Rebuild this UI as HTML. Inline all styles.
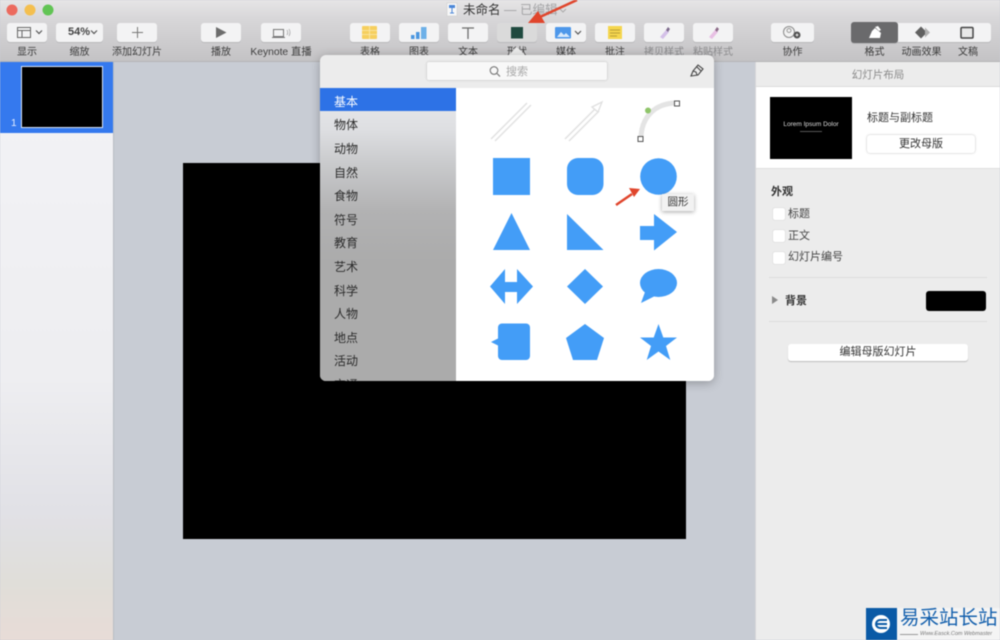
<!DOCTYPE html>
<html lang="zh">
<head>
<meta charset="utf-8">
<title>Keynote</title>
<style>
html,body{margin:0;padding:0;width:1000px;height:640px;overflow:hidden;background:#c8ccd4}
body{position:relative;font-family:"Liberation Sans","Noto Sans CJK SC",sans-serif;color:#333}
div{position:absolute;box-sizing:border-box}
#w{left:0;top:0;width:1000px;height:640px;overflow:hidden;filter:blur(.45px)}
.tb{left:0;top:0;width:1000px;height:62px;background:linear-gradient(#e6e5e6,#d8d7d9 30%,#c4c3c5);border-bottom:1px solid #b4b4b6}
.b{top:23px;height:19px;background:#f3f3f4;border-radius:3px;box-shadow:0 1px 0 #b9b9bb}
.l{top:46px;height:13px;line-height:13px;font-size:10px;text-align:center;color:#3c3c3c;white-space:nowrap}
.c{left:334px;width:100px;height:18px;line-height:18px;font-size:12px;color:#2b2b2b}
.cb{left:773px;width:12px;height:12px;background:#fff;border-radius:2px;box-shadow:0 0 1px #aaa}
.t{font-size:11px;line-height:14px;color:#444;white-space:nowrap}
.btn{background:#fff;border-radius:3px;box-shadow:0 1px 1px #bbb;text-align:center;font-size:11px;color:#333}
svg{position:absolute;left:0;top:0}
</style>
</head>
<body>
<div id="w">
<!-- toolbar -->
<div class="tb"></div>
<div class="b" style="left:7px;width:40px"></div>
<div class="b" style="left:56px;width:47px"></div>
<div class="b" style="left:117px;width:40px"></div>
<div class="b" style="left:201px;width:40px"></div>
<div class="b" style="left:261px;width:40px"></div>
<div class="b" style="left:350px;width:40px"></div>
<div class="b" style="left:399px;width:40px"></div>
<div class="b" style="left:448px;width:40px"></div>
<div class="b" style="left:497px;width:40px;background:#dadada"></div>
<div class="b" style="left:546px;width:40px"></div>
<div class="b" style="left:595px;width:40px"></div>
<div class="b" style="left:644px;width:40px"></div>
<div class="b" style="left:693px;width:40px"></div>
<div class="b" style="left:771px;width:43px"></div>
<div class="b" style="left:851px;width:140px"></div>
<div class="b" style="left:851px;width:47px;top:22px;height:21px;background:#6a6a6c"></div>
<div class="t" style="left:68px;top:25px;font-size:11px;font-weight:bold;line-height:15px;color:#444">54%</div>
<div class="l" style="left:7px;width:40px">显示</div>
<div class="l" style="left:56px;width:47px">缩放</div>
<div class="l" style="left:107px;width:60px">添加幻灯片</div>
<div class="l" style="left:201px;width:40px">播放</div>
<div class="l" style="left:240px;width:82px;font-size:10.300px">Keynote 直播</div>
<div class="l" style="left:350px;width:40px">表格</div>
<div class="l" style="left:399px;width:40px">图表</div>
<div class="l" style="left:448px;width:40px">文本</div>
<div class="l" style="left:497px;width:40px">形状</div>
<div class="l" style="left:546px;width:40px">媒体</div>
<div class="l" style="left:595px;width:40px">批注</div>
<div class="l" style="left:639px;width:50px;color:#8b8b8d">拷贝样式</div>
<div class="l" style="left:688px;width:50px;color:#8b8b8d">粘贴样式</div>
<div class="l" style="left:771px;width:43px">协作</div>
<div class="l" style="left:851px;width:47px">格式</div>
<div class="l" style="left:898px;width:47px">动画效果</div>
<div class="l" style="left:945px;width:46px">文稿</div>
<div style="left:463px;top:3px;font-size:12.500px;line-height:15px;white-space:nowrap;color:#333">未命名 <span style="color:#a2a2a4">— 已编辑</span></div>

<!-- sidebar -->
<div style="left:0;top:62px;width:114px;height:578px;background:linear-gradient(#f3f3f6,#eeeef1 55%,#e1e1e6 78%,#e0ded9 90%,#e8dcd7);border-right:1px solid #b9bdc3"></div>
<div style="left:0;top:62px;width:113px;height:71px;background:#3579ee"></div>
<div style="left:21px;top:66px;width:82px;height:62px;background:#000;border:1px solid #dbe6f8"></div>
<div style="left:11px;top:117px;font-size:10px;line-height:13px;color:#e8f0ff">1</div>

<!-- slide -->
<div style="left:183px;top:163px;width:503px;height:376px;background:#000"></div>

<!-- right panel -->
<div style="left:755px;top:62px;width:245px;height:578px;background:#ececec;border-left:1px solid #d6d6d8"></div>
<div style="left:756px;top:62px;width:244px;height:25px;line-height:26px;text-align:center;font-size:10.500px;color:#8a8a8a;border-bottom:1px solid #dcdcdc">幻灯片布局</div>
<div style="left:756px;top:87px;width:244px;height:82px;background:#fff;border-bottom:1px solid #dfdfdf"></div>
<div style="left:770px;top:97px;width:82px;height:62px;background:#000"></div>
<div style="left:770px;top:120px;width:82px;text-align:center;font-size:6.500px;line-height:10px;color:#ddd;white-space:nowrap">Lorem Ipsum Dolor</div>
<div style="left:800px;top:131px;width:22px;height:1px;background:#555"></div>
<div class="t" style="left:867px;top:111px;color:#333">标题与副标题</div>
<div class="btn" style="left:867px;top:135px;width:108px;height:18px;line-height:18px;box-shadow:0 0 2px #bbb">更改母版</div>
<div class="t" style="left:771px;top:185px;font-weight:bold;color:#333">外观</div>
<div class="cb" style="top:208px"></div><div class="t" style="left:788px;top:207px">标题</div>
<div class="cb" style="top:230px"></div><div class="t" style="left:788px;top:229px">正文</div>
<div class="cb" style="top:252px"></div><div class="t" style="left:788px;top:250px">幻灯片编号</div>
<div style="left:769px;top:277px;width:218px;height:1px;background:#dcdcdc"></div>
<div class="t" style="left:785px;top:294px;font-weight:bold;color:#333">背景</div>
<div style="left:926px;top:291px;width:60px;height:20px;background:#000;border-radius:3px"></div>
<div style="left:769px;top:321px;width:218px;height:1px;background:#dcdcdc"></div>
<div class="btn" style="left:788px;top:344px;width:180px;height:17px;line-height:17px">编辑母版幻灯片</div>

<!-- popover -->
<div style="left:509px;top:47px;width:16px;height:16px;background:#ececec;transform:rotate(45deg) scale(.72);border-radius:2px"></div>
<div style="left:320px;top:55px;width:394px;height:326px;background:#ececec;border-radius:6px;overflow:hidden;box-shadow:0 2px 10px rgba(0,0,0,.28)">
  <div style="left:0;top:33px;width:136px;height:293px;background:linear-gradient(#eaebed,#dedfe2 14%,#c9cacc 26%,#b2b2b3 42%,#ababab 60%,#ababab)"></div>
  <div style="left:0;top:33px;width:136px;height:23px;background:#2d72e6"></div>
  <div style="left:136px;top:33px;width:258px;height:293px;background:#fff"></div>
  <div style="left:107px;top:7px;width:180px;height:18px;background:#f8f8f8;border-radius:2px;box-shadow:0 0 2px #b5b5b5"></div>
  <div style="left:186px;top:10px;font-size:11px;line-height:15px;color:#a8a8a8">搜索</div>
</div>
<div class="c" style="top:93px;color:#fff">基本</div>
<div class="c" style="top:116px">物体</div>
<div class="c" style="top:140px">动物</div>
<div class="c" style="top:164px">自然</div>
<div class="c" style="top:187px">食物</div>
<div class="c" style="top:211px">符号</div>
<div class="c" style="top:234px">教育</div>
<div class="c" style="top:258px">艺术</div>
<div class="c" style="top:282px">科学</div>
<div class="c" style="top:305px">人物</div>
<div class="c" style="top:329px">地点</div>
<div class="c" style="top:352px">活动</div>
<div style="left:320px;top:370px;width:136px;height:11px;overflow:hidden"><div class="c" style="left:14px;top:6px">交通</div></div>

<!-- icons and shapes -->
<svg width="1000" height="640" viewBox="0 0 1000 640">
  <circle cx="12" cy="10" r="5.500" fill="#ec6a5e"/>
  <circle cx="30" cy="10" r="5.500" fill="#f4bf4f"/>
  <circle cx="48" cy="10" r="5.500" fill="#61c454"/>
  <rect x="447" y="3" width="10" height="13" fill="#f7f7f7" stroke="#c8c8c8" stroke-width=".5"/>
  <rect x="449" y="5" width="6" height="3" fill="#4a86d8"/>
  <path d="M452 8v5M450 13h4" stroke="#4a86d8" fill="none"/>
  <path d="M560 9l3 3 3-3" stroke="#aaa" fill="none"/>
  <path d="M17.500 27.500h13v10h-13zM17.500 30.500h13M22 30.500v7" stroke="#666" fill="none"/>
  <path d="M36 30.500l3 3 3-3" stroke="#555" stroke-width="1.200" fill="none"/>
  <path d="M91 30.500l3 3 3-3" stroke="#555" stroke-width="1.200" fill="none"/>
  <path d="M137.500 27v11M132 32.500h11" stroke="#777" fill="none"/>
  <path d="M216 27l10.500 5.500L216 38z" fill="#6c6c6c"/>
  <path d="M273.500 29.500h10v7h-10zM272 37.500h13" stroke="#777" fill="none"/>
  <path d="M287 30q1.500 2.500 0 5M289 29q2 3.500 0 7" stroke="#999" stroke-width=".7" fill="none"/>
  <rect x="362" y="26" width="15" height="13" rx="1" fill="#f6cf5e"/>
  <path d="M362 30.500h15M362 34.500h15M369.500 26v13" stroke="#fbe9ae" stroke-width=".8"/>
  <rect x="411" y="35" width="3.500" height="4" fill="#4c97e0"/>
  <rect x="416" y="32" width="3.500" height="7" fill="#4c97e0"/>
  <rect x="421" y="27" width="5.500" height="12" fill="#6db0e8"/>
  <path d="M462 28h12M468 28v11" stroke="#6c6c6c" stroke-width="1.300" fill="none"/>
  <rect x="511" y="27" width="12" height="11.500" fill="#1f4a3f"/>
  <rect x="555" y="27" width="16" height="11.500" rx="1" fill="#4d97ea"/>
  <path d="M557 37l4-5 3 3 2-2 4 4z" fill="#d8e9fb"/>
  <path d="M575 31l3 3 3-3" stroke="#555" stroke-width="1.200" fill="none"/>
  <rect x="608" y="26" width="14" height="13" fill="#f5d64e"/>
  <path d="M610 30h10M610 33h10M610 36h7" stroke="#a58d32" stroke-width=".8"/>
  <path d="M660 37l6-7 3 2-6 7z" fill="#d4c0e8"/>
  <path d="M666 30l2-3 2 2-2 3z" fill="#7d6a8c"/>
  <path d="M709 37l6-7 3 2-6 7z" fill="#e8c0e4"/>
  <path d="M715 30l2-3 2 2-2 3z" fill="#8c6a88"/>
  <circle cx="789" cy="32" r="5.500" fill="#f2f2f2" stroke="#8a8a8a"/>
  <circle cx="789" cy="30.500" r="2" fill="none" stroke="#999"/>
  <circle cx="797" cy="35" r="3.500" fill="#555"/>
  <path d="M795.500 35h3M797 33.500v3" stroke="#fff" stroke-width=".8"/>
  <path d="M869 38l3-7 3-3 6 5-1 5z" fill="#fff"/>
  <path d="M875 27l3-1 3 4-2 1z" fill="#fff"/>
  <path d="M921 26.500l6 6-6 6-6-6z" fill="#606060"/>
  <path d="M925 27.500l5 5-5 5" fill="#b0b0b0"/>
  <rect x="961" y="27.500" width="12" height="10.500" rx="1" fill="#e8e8e8" stroke="#444" stroke-width="1.500"/>
  <circle cx="494" cy="70.500" r="3.800" fill="none" stroke="#777" stroke-width="1.100"/>
  <path d="M497 73.500l3 3" stroke="#777" stroke-width="1.200"/>
  <path d="M691 76l2-5 5-6 5 4-5 6zM697 67l4 4M693 71l3 1 1 3" fill="none" stroke="#444" stroke-width="1.100"/>
  <path d="M491 139l36-36M495 141l36-36" stroke="#e2e2e2" stroke-width="1.500"/>
  <path d="M565 139l30-30M569 141l30-30" stroke="#e2e2e2" stroke-width="1.500"/>
  <path d="M592 107l10-5-4 10z" fill="#fff" stroke="#e0e0e0" stroke-width="1.300"/>
  <path d="M641 139C641 118 654 103 677 103" fill="none" stroke="#e4e4e4" stroke-width="5"/>
  <circle cx="648" cy="110.500" r="3" fill="#8fc56a"/>
  <rect x="638" y="136.500" width="5" height="5" fill="#fff" stroke="#555"/>
  <rect x="674.500" y="101" width="5" height="5" fill="#fff" stroke="#555"/>
  <g fill="#439df7">
    <rect x="493" y="158" width="37" height="37"/>
    <rect x="567" y="158" width="36.500" height="37" rx="11"/>
    <circle cx="658.500" cy="176.500" r="18.300"/>
    <path d="M511.500 213L530 250H493z"/>
    <path d="M567 214l36.500 36H567z"/>
    <path d="M654 214l23 18-23 18.500V240h-14v-14h14z"/>
    <path d="M490 286.500L505 269v13h12v-13l16 17.500-16 17.500v-12h-12v12z"/>
    <path d="M585 269l18 17.500-18 17.500-18-17.500z"/>
    <ellipse cx="658.500" cy="283" rx="18.500" ry="14"/>
    <path d="M645 292l-4 11 14-7z"/>
    <rect x="498" y="323.500" width="32" height="36.500" rx="4"/>
    <path d="M499 338l-8 4 8 4z"/>
    <path d="M585 324l19 14-7 22h-24l-7-22z"/>
    <path d="M658.500 324l4.800 13.500H677l-11 8.500 4.300 14-11.800-8.500-11.800 8.500 4.300-14-11-8.500h13.700z"/>
  </g>
  <path d="M772 296l6 4-6 4z" fill="#8a8a8a"/>
  <path d="M577 0L540 17" stroke="#e0452c" stroke-width="2.500"/>
  <path d="M528 23l10-12 7 12z" fill="#e0452c"/>
  <path d="M616 205l16-11" stroke="#e0452c" stroke-width="2.500"/>
  <path d="M640 189l-11-1 5 9z" fill="#e0452c"/>
</svg>

<!-- tooltip -->
<div style="left:662px;top:194px;width:32px;height:17px;background:#f2f2f2;box-shadow:0 1px 4px rgba(0,0,0,.35);font-size:10.500px;line-height:17px;text-align:center;color:#333">圆形</div>

<!-- watermark -->
<div style="left:866px;top:608px;width:134px;height:32px;background:#f4f4f4"></div>
<div style="left:866px;top:608px;width:31px;height:32px;background:#0a5aa6"></div>
<svg width="1000" height="640" viewBox="0 0 1000 640">
  <circle cx="881" cy="624" r="9" fill="#fff"/>
  <path d="M887 620h-7a4 4 0 0 0 0 8h7M877 624h10" stroke="#0a5aa6" stroke-width="2" fill="none"/>
</svg>
<div style="left:900px;top:606px;width:100px;font-size:19.500px;line-height:24px;color:#1460ad;white-space:nowrap">易采站长站</div>
<div style="left:920px;top:630px;width:80px;height:9px;overflow:hidden;font-size:5.500px;line-height:9px;color:#777;white-space:nowrap;font-style:italic">Www.Easck.Com Webmaster</div>
<div style="left:900px;top:634px;width:18px;height:1px;background:#999"></div>
</div>
</body>
</html>
